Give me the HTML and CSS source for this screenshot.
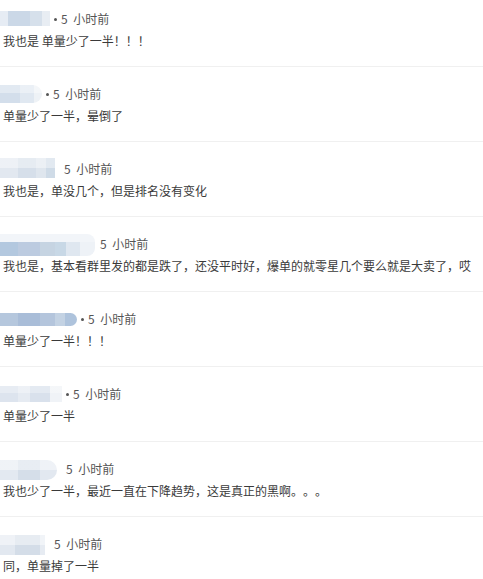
FILE: index.html
```html
<!DOCTYPE html>
<html lang="zh-CN">
<head>
<meta charset="utf-8">
<title>评论</title>
<link rel="stylesheet" href="styles.css">
</head>
<body>
<ul class="list">
  <li class="item first">
    <div class="head"><span class="name n1"></span><span class="dot"></span><span class="time">5 小时前</span></div>
    <p class="text">我也是 单量少了一半！！！</p>
  </li>
  <li class="item">
    <div class="head"><span class="name n2"></span><span class="dot"></span><span class="time">5 小时前</span></div>
    <p class="text">单量少了一半，晕倒了</p>
  </li>
  <li class="item">
    <div class="head"><span class="name n3"></span><span class="time wide">5 小时前</span></div>
    <p class="text">我也是，单没几个，但是排名没有变化</p>
  </li>
  <li class="item">
    <div class="head"><span class="name n4"></span><span class="time narrow">5 小时前</span></div>
    <p class="text">我也是，基本看群里发的都是跌了，还没平时好，爆单的就零星几个要么就是大卖了，哎</p>
  </li>
  <li class="item">
    <div class="head"><span class="name n5"></span><span class="dot"></span><span class="time">5 小时前</span></div>
    <p class="text">单量少了一半！！！</p>
  </li>
  <li class="item">
    <div class="head"><span class="name n6"></span><span class="dot"></span><span class="time">5 小时前</span></div>
    <p class="text">单量少了一半</p>
  </li>
  <li class="item">
    <div class="head"><span class="name n7"></span><span class="time wide">5 小时前</span></div>
    <p class="text">我也少了一半，最近一直在下降趋势，这是真正的黑啊。。。</p>
  </li>
  <li class="item">
    <div class="head"><span class="name n8"></span><span class="time wide">5 小时前</span></div>
    <p class="text">同，单量掉了一半</p>
  </li>
</ul>
</body>
</html>
```

FILE: styles.css
```css
html, body {
  margin: 0;
  padding: 0;
  background: #ffffff;
}

body {
  font-family: "Noto Sans CJK SC", "Microsoft YaHei", sans-serif;
  font-size: 12px;
  color: #333333;
  overflow: hidden;
  text-spacing-trim: space-all;
}

.list {
  list-style: none;
  margin: 0;
  padding: 0;
}

.item {
  padding: 19px 0 17px 0;
  border-bottom: 1px solid #f0f0f0;
}

.item.first {
  padding-top: 11px;
}

.head {
  display: flex;
  align-items: center;
  height: 16px;
  line-height: 16px;
  color: #555555;
}

.name {
  display: block;
  flex: none;
  filter: blur(0.6px);
}

.dot {
  display: block;
  flex: none;
  width: 3px;
  height: 3px;
  border-radius: 50%;
  background: #555555;
  margin-left: 4px;
  margin-right: 4px;
}

.time {
  white-space: nowrap;
  word-spacing: 3px;
}

.time.wide {
  margin-left: 9px;
}

.time.narrow {
  margin-left: 5px;
}

.text {
  margin: 6px 0 0 0;
  padding-left: 3px;
  height: 16px;
  line-height: 16px;
  white-space: nowrap;
  color: #3a3a3a;
}

.n1 {
  width: 50px;
  height: 15px;
  margin-top: -2px;
  background: linear-gradient(90deg, #e6ecf4 0 8px, #cbd8e7 8px 30px, #d6e0eb 30px 42px, #e8edf3 42px 50px);
}

.n2 {
  width: 42px;
  height: 18px;
  border-radius: 0 9px 9px 0;
  background:
    linear-gradient(180deg, rgba(255,255,255,0.35) 0 8px, rgba(255,255,255,0) 8px),
    linear-gradient(90deg, #d3deeb 0 20px, #e0e8f1 20px 34px, #eef2f6 34px 42px);
}

.n3 {
  width: 55px;
  height: 20px;
  margin-top: -2px;
  background:
    linear-gradient(180deg, rgba(255,255,255,0.4) 0 10px, rgba(255,255,255,0) 10px),
    linear-gradient(90deg, #e2e8f0 0 18px, #d6dfea 18px 36px, #dfe6ee 36px 46px, #cfdbe7 46px 55px);
}

.n4 {
  width: 95px;
  height: 22px;
  margin-top: 2px;
  border-radius: 0 8px 8px 0;
  background:
    linear-gradient(180deg, #f2f5f9 0 8px, rgba(255,255,255,0) 8px),
    linear-gradient(90deg, #b3c8df 0 18px, #bccbe0 18px 40px, #c6d4e2 40px 55px, #c8d8e6 55px 66px, #dfe7f0 66px 80px, #eef2f7 80px 95px);
}

.n5 {
  width: 77px;
  height: 13px;
  border-radius: 0 7px 7px 0;
  background: linear-gradient(90deg, #b5c7dd 0 18px, #a9bdd8 18px 40px, #b4c5dc 40px 55px, #c3d2e3 55px 65px, #aec3dc 65px 77px);
}

.n6 {
  width: 62px;
  height: 16px;
  background:
    linear-gradient(180deg, rgba(255,255,255,0.3) 0 7px, rgba(255,255,255,0) 7px),
    linear-gradient(90deg, #dde4ee 0 18px, #e6ebf2 18px 30px, #d9e1ec 30px 50px, #f0f3f7 50px 62px);
}

.n7 {
  width: 57px;
  height: 20px;
  margin-top: 2px;
  border-radius: 0 10px 10px 0;
  background:
    linear-gradient(180deg, rgba(255,255,255,0.45) 0 10px, rgba(255,255,255,0) 10px),
    linear-gradient(90deg, #e3e9f1 0 18px, #d5dee9 18px 40px, #e2e8f0 40px 57px);
}

.n8 {
  width: 45px;
  height: 20px;
  margin-top: 2px;
  background:
    linear-gradient(180deg, rgba(255,255,255,0.45) 0 10px, rgba(255,255,255,0) 10px),
    linear-gradient(90deg, #e2e8f0 0 15px, #d4dde8 15px 40px, #e6ebf2 40px 45px);
}
```
